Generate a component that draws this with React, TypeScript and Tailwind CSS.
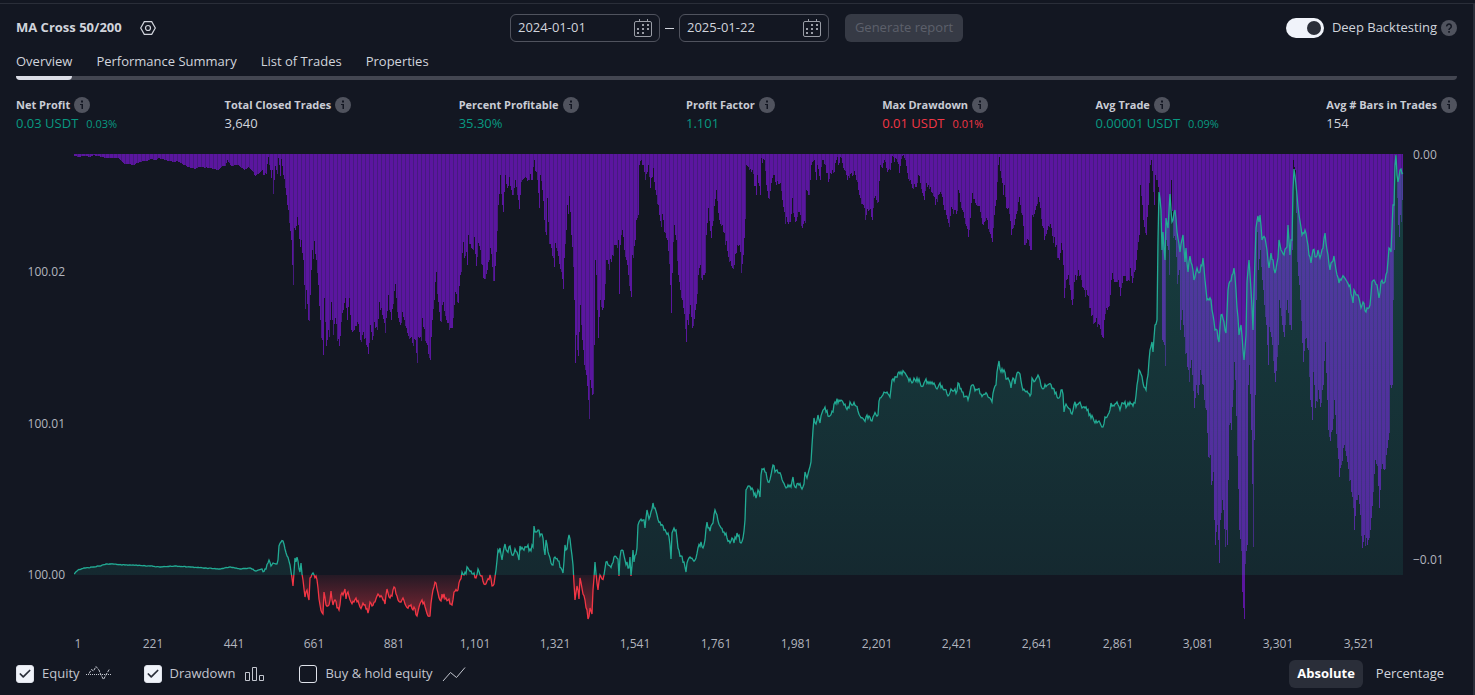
import { Check } from "lucide-react";
import type { ReactNode } from "react";

const STATS = [
  { label: "Net Profit", value: "0.03 USDT", percent: "0.03%", tone: "text-[#089981]" },
  { label: "Total Closed Trades", value: "3,640", tone: "text-[#d1d4dc]" },
  { label: "Percent Profitable", value: "35.30%", tone: "text-[#089981]" },
  { label: "Profit Factor", value: "1.101", tone: "text-[#089981]" },
  { label: "Max Drawdown", value: "0.01 USDT", percent: "0.01%", tone: "text-[#f23645]" },
  { label: "Avg Trade", value: "0.00001 USDT", percent: "0.09%", tone: "text-[#089981]" },
  { label: "Avg # Bars in Trades", value: "154", tone: "text-[#d1d4dc]" },
];

const TABS = ["Overview", "Performance Summary", "List of Trades", "Properties"];

// chart series as "x,y" pairs in chart units, y grows downwards
const EQUITY = `74,574 78,570 85,568 93,567 100,566 106,564 113,564 125,565 133,565 150,566 160,567 175,566 190,567 205,568
220,569 230,567 240,569 250,568 256,571 262,569 266,569 268,563 269,560 271,566 273,563 276,564 278,560 279,546 281,542 283,541
285,549 287,556 290,565 292,578 293,586 295,558 298,561 300,572 301,563 303,580 305,597 307,590 309,600 310,578 313,573 316,576
318,588 320,605 323,614 324,592 326,605 329,605 331,591 333,605 335,600 339,610 341,595 344,592 345,589 346,599 348,592 351,602
354,602 356,598 360,607 364,605 368,613 370,602 372,606 375,602 378,594 380,597 385,604 387,589 390,598 392,596 394,587 397,596
400,602 403,598 406,606 410,606 415,609 417,616 419,607 422,600 426,610 430,616 432,596 434,587 436,583 438,593 440,600 444,594
446,598 452,605 454,592 458,590 460,580 462,572 464,575 468,568 471,571 474,573 476,578 478,569 481,576 484,584 487,581 490,575
492,586 494,584 496,570 498,550 500,548 502,560 505,544 507,551 510,546 512,555 515,549 519,560 520,546 523,549 527,547 530,549
533,547 534,526 536,532 538,530 540,536 542,534 545,555 546,540 549,555 553,565 555,557 559,561 561,568 563,573 565,545 567,549
569,535 571,548 573,565 575,600 577,586 579,599 580,578 583,594 585,600 587,610 588,619 590,608 592,614 593,590 595,562 598,590
600,575 602,579 604,575 606,562 610,566 612,564 615,556 618,559 619,576 620,557 622,550 625,560 629,568 630,557 631,576 633,550
634,562 637,548 638,525 639,522 642,521 644,520 645,528 647,510 649,519 651,512 653,503 655,508 657,515 660,522 664,530 668,533
670,545 671,559 672,533 674,528 676,530 678,548 681,556 684,562 686,572 687,563 690,557 693,560 696,558 698,548 701,542 703,548
705,540 707,522 710,531 713,523 715,510 717,515 720,526 724,532 727,538 730,543 732,538 734,543 737,533 741,543 743,538 745,520
746,490 749,486 753,490 756,498 758,490 760,497 761,475 762,469 765,472 768,482 771,475 773,465 775,472 779,473 783,482 786,488
791,487 793,477 795,487 799,485 802,489 804,484 805,472 807,478 809,470 811,462 813,430 814,418 816,424 818,415 820,423 822,413
825,407 828,416 833,412 835,402 841,400 844,405 849,408 850,402 856,406 860,416 864,420 866,417 872,421 874,415 878,415 879,401
882,396 886,393 890,397 892,380 896,377 900,374 904,372 908,378 913,382 917,378 923,386 925,381 932,382 936,388 940,383 944,390
949,395 951,389 957,391 958,383 962,392 968,400 970,392 972,385 977,390 983,395 987,394 992,402 994,389 996,385 997,372 999,361
1001,372 1004,370 1006,379 1009,380 1011,388 1013,378 1015,384 1017,373 1020,374 1023,390 1026,392 1031,394 1032,378 1035,381
1038,375 1043,389 1049,384 1054,389 1059,398 1061,390 1063,394 1064,412 1066,404 1070,409 1072,414 1074,405 1079,403 1085,408
1090,414 1094,421 1099,421 1103,427 1105,417 1109,413 1111,403 1115,404 1117,402 1120,410 1123,403 1127,406 1130,402 1133,406
1135,403 1137,385 1139,370 1141,374 1143,383 1146,390 1148,375 1150,350 1152,342 1153,352 1155,325 1157,320 1158,240 1159,192
1161,210 1162,250 1163,232 1165,260 1166,218 1168,228 1170,194 1172,222 1175,210 1177,232 1180,252 1183,235 1185,262 1186,248
1188,272 1190,256 1192,265 1194,280 1197,268 1200,272 1203,258 1205,280 1207,300 1211,300 1213,315 1215,330 1217,330 1219,342
1221,315 1224,322 1226,333 1228,290 1232,275 1234,268 1236,290 1239,335 1241,325 1243,350 1244,360 1246,335 1247,282 1249,260
1251,290 1253,330 1254,290 1256,228 1258,216 1259,222 1260,215 1262,240 1265,238 1267,250 1269,268 1271,253 1273,260 1275,273
1278,258 1279,240 1281,250 1284,255 1287,247 1288,225 1290,255 1291,240 1292,240 1293,190 1294,169 1296,185 1297,195 1299,215
1302,235 1305,230 1307,240 1309,255 1311,263 1313,250 1316,257 1318,250 1320,258 1323,248 1325,233 1327,250 1330,270 1332,262
1334,256 1336,270 1339,283 1342,278 1346,280 1350,285 1353,303 1354,290 1358,295 1361,308 1363,302 1366,312 1370,305 1372,282
1374,280 1377,285 1379,298 1381,282 1384,283 1387,272 1389,248 1391,252 1393,205 1394,205 1395,165 1396,155 1397,175 1398,182
1400,170 1403,173`;

const DRAWDOWN = `74,156 78,157 84,156 90,157 93,155 97,156 106,158 118,158 121,161 124,164 129,164 133,165 137,163 142,161 147,161
150,159 155,160 158,158 165,160 170,161 175,162 177,161 182,164 188,167 194,169 200,167 210,168 218,170 222,166 225,166 227,160
231,166 238,165 244,170 248,167 252,171 255,176 259,173 262,170 266,174 268,157 271,178 272,170 273,194 275,166 277,174 278,158
280,176 281,159 283,175 285,185 287,205 289,220 291,240 293,284 294,228 295,230 297,215 298,225 300,247 301,240 303,260 305,308
306,290 308,320 309,320 311,270 312,250 313,258 314,241 316,260 318,285 320,320 322,340 323,355 324,298 326,346 328,330 329,332
331,302 333,333 335,318 339,346 341,320 343,310 345,296 347,320 349,298 351,330 354,330 357,320 360,340 363,332 366,345 368,354
370,325 372,340 374,322 377,330 379,302 382,315 385,332 388,295 391,320 395,284 397,310 400,325 402,312 406,328 410,338 413,342
415,340 417,360 418,337 421,338 422,318 425,340 427,345 430,360 432,320 434,300 436,272 437,290 440,321 443,302 445,315 449,326
452,328 455,292 458,303 460,275 463,242 464,258 466,252 467,265 468,235 470,244 473,248 474,237 476,266 478,243 480,250 483,278
487,270 490,248 491,254 493,280 494,281 496,252 498,205 500,175 502,205 503,212 505,175 507,188 509,177 512,195 515,180 519,209
521,182 524,178 528,180 530,174 532,180 534,160 537,180 539,208 540,175 542,190 544,220 546,235 547,198 549,240 551,248 553,258
554,267 555,243 558,256 561,270 563,289 564,258 566,230 567,205 568,214 569,195 571,235 573,262 574,300 575,363 576,335 578,356
580,305 582,340 584,365 586,375 588,400 589,418 590,380 592,395 593,390 594,345 595,260 596,275 598,338 600,300 602,310 604,300
606,260 609,265 612,255 614,245 616,245 618,240 619,294 620,245 622,230 624,250 626,260 628,275 631,297 632,255 635,240 636,220
638,215 639,165 641,160 643,165 645,180 648,165 650,188 653,168 655,190 658,205 661,225 662,214 664,232 667,240 669,260 671,313
673,240 674,225 676,240 678,275 680,290 683,308 685,325 686,342 687,320 688,325 690,305 692,328 695,310 697,290 698,275 700,265
702,280 705,270 706,235 708,208 711,238 713,218 716,190 717,200 719,220 722,225 725,240 729,260 732,268 734,265 737,242 740,252
741,270 743,255 745,215 746,165 749,170 752,170 756,195 757,175 760,195 761,158 764,160 766,185 768,198 771,183 773,175 776,185
780,183 782,200 785,220 788,224 790,222 792,198 795,222 799,212 801,225 805,222 806,190 808,195 810,180 811,165 814,160 816,180
817,165 820,180 822,160 825,165 828,182 830,173 834,172 836,160 839,163 840,157 843,168 846,175 849,178 851,173 855,175 858,190
861,203 864,208 866,215 869,208 872,220 874,198 878,202 880,165 882,168 884,160 887,172 890,170 892,156 897,162 899,173 902,156
905,160 907,173 910,180 913,188 916,187 918,175 921,185 924,200 926,183 930,187 933,195 935,205 938,195 941,190 943,205 946,215
949,223 951,207 955,210 957,210 958,190 961,205 964,218 968,237 970,218 972,193 975,203 980,212 983,225 986,218 989,232 992,242
994,215 996,200 998,165 999,157 1001,178 1003,195 1004,185 1006,208 1009,212 1011,235 1014,225 1017,210 1019,197 1022,215
1024,245 1028,240 1031,250 1032,215 1035,210 1038,197 1041,215 1044,240 1047,230 1049,222 1053,238 1056,245 1059,260 1061,240
1063,265 1064,298 1066,280 1068,275 1070,290 1072,305 1074,282 1078,270 1081,280 1084,290 1087,295 1090,308 1093,322 1096,318
1099,325 1103,338 1104,320 1106,308 1109,305 1111,280 1112,273 1115,282 1118,280 1120,296 1122,283 1124,276 1128,280 1130,268
1132,283 1135,270 1137,245 1139,235 1140,185 1141,195 1143,220 1146,235 1148,205 1150,165 1151,160 1154,205 1155,175 1157,180
1159,195 1161,220 1162,340 1164,345 1165,362 1166,240 1168,250 1169,272 1170,200 1171,180 1173,235 1175,240 1177,280 1179,270
1180,330 1182,310 1185,350 1188,370 1189,380 1191,360 1194,408 1196,385 1198,395 1200,370 1203,385 1204,400 1206,410 1208,457
1210,455 1211,485 1213,470 1214,520 1215,545 1217,520 1218,540 1219,563 1220,520 1222,500 1223,510 1225,546 1226,530 1227,545
1228,480 1229,420 1231,430 1233,385 1234,362 1235,380 1237,455 1239,530 1241,550 1242,592 1244,619 1245,560 1247,545 1248,385
1249,360 1251,430 1253,545 1254,440 1255,395 1256,300 1257,230 1258,270 1260,250 1262,280 1264,305 1266,325 1268,365 1269,325
1272,345 1275,382 1278,345 1279,300 1282,325 1284,337 1287,300 1289,320 1291,330 1292,250 1293,160 1295,170 1297,260 1300,300
1303,362 1305,335 1308,350 1310,400 1312,420 1313,370 1315,408 1318,390 1320,407 1323,385 1325,342 1327,400 1328,430 1330,441
1332,430 1334,400 1337,445 1339,477 1341,465 1344,445 1347,462 1350,480 1353,505 1354,530 1356,500 1358,495 1360,515 1362,548
1364,535 1367,545 1370,530 1373,490 1375,460 1377,465 1379,508 1381,465 1384,470 1386,455 1389,430 1390,385 1392,385 1393,300
1394,250 1395,165 1396,155 1398,225 1399,237 1400,215 1401,220 1402,200 1403,210`;

const TOP = 154;
const BASE = 575;
const LEFT = 74;
const RIGHT = 1403;

// cheap repeatable noise in -1..1
const noise = (n: number) => {
  const s = Math.sin(n * 12.9898) * 43758.5453;
  return (s - Math.floor(s)) * 2 - 1;
};

// one sample per column; samples between two known points get a little noise
function resample(series: string, amount: number) {
  const pts = series.trim().split(/\s+/).map((p) => p.split(",").map(Number));
  const out: number[] = [];
  for (let i = 0; i < pts.length - 1; i++) {
    const [x0, y0] = pts[i];
    const [x1, y1] = pts[i + 1];
    for (let x = x0; x < x1; x++) {
      const y = y0 + ((y1 - y0) * (x - x0)) / (x1 - x0);
      out.push(x === x0 ? y : y + noise(x) * (x < 262 ? 0.3 : amount));
    }
  }
  out.push(pts[pts.length - 1][1]);
  return out;
}

const equity = resample(EQUITY, 3);
const drawdown = resample(DRAWDOWN, 4);

const linePath = "M" + equity.map((y, i) => `${LEFT + i},${y.toFixed(1)}`).join("L");
const areaPath = `${linePath}L${RIGHT},${BASE}L${LEFT},${BASE}Z`;

const columns = (keep: (i: number) => boolean, extra: number) =>
  drawdown
    .map((y, i) => {
      if (!keep(i) || LEFT + i >= RIGHT) return "";
      const bottom = Math.max(TOP + 1, Math.round(y + extra * (y - TOP > 30 ? Math.abs(noise(i)) : 0)));
      return `M${LEFT + i},${TOP}h1V${bottom}h-1Z`;
    })
    .join("");

const isGap = (i: number) => i % 4 === 3;
const barsPath = columns((i) => !isGap(i), 0);
const gapsPath = columns(isGap, 5);

const X_LABELS = Array.from({ length: 17 }, (_, i) => ({
  text: (1 + i * 220).toLocaleString("en-US"),
  x: i === 0 ? 78 : 73 + i * 80.35,
}));

function Chart() {
  return (
    <svg viewBox="0 145 1473 510" className="block w-full h-auto" role="img" aria-label="Equity and drawdown">
      <defs>
        <clipPath id="above">
          <rect x={LEFT} y={TOP - 2} width={RIGHT - LEFT + 1} height={BASE - TOP + 2} />
        </clipPath>
        <clipPath id="below">
          <rect x={LEFT} y={BASE} width={RIGHT - LEFT + 1} height={60} />
        </clipPath>
        <linearGradient id="gain" gradientUnits="userSpaceOnUse" x1="0" x2="0" y1={TOP} y2={BASE}>
          <stop offset="0" stopColor="#22ab94" stopOpacity="0.28" />
          <stop offset="1" stopColor="#22ab94" stopOpacity="0.12" />
        </linearGradient>
        <linearGradient id="loss" gradientUnits="userSpaceOnUse" x1="0" x2="0" y1={BASE} y2={BASE + 44}>
          <stop offset="0" stopColor="#f23645" stopOpacity="0.08" />
          <stop offset="1" stopColor="#f23645" stopOpacity="0.5" />
        </linearGradient>
      </defs>

      <path d={barsPath} fill="#5b169f" shapeRendering="crispEdges" />
      <path d={gapsPath} fill="#461a7f" shapeRendering="crispEdges" />

      <g clipPath="url(#above)">
        <path d={areaPath} fill="url(#gain)" />
        <path d={linePath} fill="none" stroke="#22ab94" strokeWidth="1.3" />
      </g>
      <g clipPath="url(#below)">
        <path d={areaPath} fill="url(#loss)" />
        <path d={linePath} fill="none" stroke="#f23645" strokeWidth="1.3" />
      </g>

      <g fill="#b2b5be" fontSize="12" fontWeight="500">
        <text x="65" y="276" textAnchor="end">100.02</text>
        <text x="65" y="428" textAnchor="end">100.01</text>
        <text x="65" y="579" textAnchor="end">100.00</text>
        <text x="1413" y="159">0.00</text>
        <text x="1413" y="564">−0.01</text>
        {X_LABELS.map((l) => (
          <text key={l.text} x={Math.round(l.x)} y="648" textAnchor="middle">
            {l.text}
          </text>
        ))}
      </g>
    </svg>
  );
}

function InfoIcon() {
  return (
    <svg width="16" height="16" viewBox="0 0 16 16" className="shrink-0">
      <circle cx="8" cy="8" r="8" fill="#50535e" />
      <path d="M7 3.5h2v2H7zM6 7h3v5H7.5V8H6z" fill="#131722" />
    </svg>
  );
}

function HelpIcon() {
  return (
    <svg width="16" height="16" viewBox="0 0 16 16" className="shrink-0">
      <circle cx="8" cy="8" r="8" fill="#50535e" />
      <path d="M5.7 6.4a2.3 2.2 0 1 1 3.6 1.7C8.4 8.7 8 9 8 9.9" fill="none" stroke="#131722" strokeWidth="1.6" />
      <path d="M7.2 11h1.700v1.700H7.200z" fill="#131722" />
    </svg>
  );
}

function CalendarIcon() {
  return (
    <svg width="18" height="18" viewBox="0 0 18 18" fill="none" className="shrink-0" stroke="#9a9da6">
      <rect x="0.5" y="2.5" width="17" height="15" rx="1.5" />
      <path d="M5.5 0v2.5M13.5 0v2.5" />
      <path
        d="M8 5h2v2H8zM13 5h2v2h-2zM3 9h2v2H3zM8 9h2v2H8zM13 9h2v2h-2zM3 13h2v2H3zM8 13h2v2H8z"
        fill="#9a9da6"
        stroke="none"
      />
    </svg>
  );
}

function DateField({ label, value }: { label: string; value: string }) {
  return (
    <label className="flex h-7 w-[150px] items-center rounded-md border border-[#50535e] px-[7px]">
      <input aria-label={label} defaultValue={value} className="w-full min-w-0 bg-transparent text-[#d1d4dc] outline-none" />
      <CalendarIcon />
    </label>
  );
}

function Toggle({ label, checked, children }: { label: string; checked?: boolean; children: ReactNode }) {
  return (
    <label className="flex items-center gap-2">
      <span className="grid">
        <input
          type="checkbox"
          defaultChecked={checked}
          className="peer col-start-1 row-start-1 size-[18px] appearance-none rounded-[3px] border border-[#e0e3eb] checked:bg-[#f0f3fa]"
        />
        <Check
          size={14}
          strokeWidth={3}
          className="pointer-events-none col-start-1 row-start-1 hidden place-self-center text-[#2a2e39] peer-checked:block"
        />
      </span>
      <span className="flex items-center gap-1.5">
        {label}
        {children}
      </span>
    </label>
  );
}

export default function App() {
  return (
    <div className="min-h-screen bg-[#131722] pt-[3px] font-['Open_Sans',sans-serif] text-[13px] font-medium text-[#d1d4dc]">
      <div className="min-h-[692px] border-t border-r-2 border-[#2a2e39]">
        <header className="grid grid-cols-[1fr_auto_1fr] items-center px-4 pt-2.5">
          <div className="flex items-center gap-[18px]">
            <h1 className="font-bold">MA Cross 50/200</h1>
            <button aria-label="Settings">
              <svg width="16" height="14" viewBox="0 0 16 14" fill="none" stroke="#d1d4dc" strokeWidth="1.2">
                <path d="M4.3.6h7.4L15.3 7l-3.6 6.4H4.3L.7 7z" />
                <circle cx="8" cy="7" r="2.5" />
              </svg>
            </button>
          </div>
          <div className="flex items-center">
            <DateField label="From" value="2024-01-01" />
            <span className="mx-[5px] h-px w-[9px] bg-[#d1d4dc]" />
            <DateField label="To" value="2025-01-22" />
            <button disabled className="ml-4 h-7 w-[118px] rounded-md bg-[#363a45] text-[#5d606b]">
              Generate report
            </button>
          </div>
          <div className="flex items-center justify-end">
            <label className="flex items-center gap-2">
              <input
                type="checkbox"
                role="switch"
                defaultChecked
                className="flex h-5 w-[38px] appearance-none items-center justify-end rounded-full bg-[#f0f3fa] px-[3px] before:size-3.5 before:rounded-full before:bg-[#2a2e39]"
              />
              Deep Backtesting
            </label>
            <span className="ml-1">
              <HelpIcon />
            </span>
          </div>
        </header>

        <nav className="mx-4 mt-[9px] flex gap-6 rounded-b-sm bg-[linear-gradient(#434651,#434651)] bg-[length:100%_4px] bg-bottom bg-no-repeat">
          {TABS.map((tab, i) => (
            <button
              key={tab}
              className={
                i === 0
                  ? "rounded-b-sm border-b-4 border-[#dbdde6] pb-[5px] leading-5"
                  : "border-b-4 border-transparent pb-[5px] leading-5"
              }
            >
              {tab}
            </button>
          ))}
        </nav>

        <dl className="flex justify-between px-4 pt-4">
          {STATS.map((s) => (
            <div key={s.label}>
              <dt className="flex h-[18px] items-center gap-1 text-[11px] font-bold text-[#c9ccd5]">
                {s.label}
                <InfoIcon />
              </dt>
              <dd className={`flex h-5 items-center gap-2 ${s.tone}`}>
                {s.value}
                {s.percent && <span className="text-[11px]">{s.percent}</span>}
              </dd>
            </div>
          ))}
        </dl>

        <div className="mt-[11px]">
          <Chart />
        </div>

        <footer className="flex items-center justify-between pt-[5px] pr-[21px] pl-4">
          <div className="flex items-center gap-[30px] text-[#c3c6cf]">
            <Toggle label="Equity" checked>
              <svg width="28" height="18" viewBox="0 0 28 18" fill="none" stroke="#c3c6cf">
                <path d="M0 9.5h25" strokeDasharray="1 1" />
                <path d="M3 8.5l2.500-4 2 1.500L10 1.500l3 3.500 1.500 4 3 5.500 3-5.500 3-5" strokeDasharray="3 1" />
              </svg>
            </Toggle>
            <Toggle label="Drawdown" checked>
              <svg width="28" height="16" viewBox="0 0 28 16" fill="none" stroke="#c3c6cf">
                <path d="M4.5 6.5h4v8h-4zM11.5 1.5h4v13h-4zM18.5 9.5h4v5h-4z" />
              </svg>
            </Toggle>
            <Toggle label="Buy & hold equity">
              <svg width="28" height="16" viewBox="0 0 28 16" fill="none" stroke="#c3c6cf">
                <path d="M4 15l7.500-8.500 6 5L26 1.500" />
              </svg>
            </Toggle>
          </div>
          <div className="flex gap-[5px]">
            <button className="h-7 rounded-md bg-[#2a2e39] px-2 font-bold text-white">Absolute</button>
            <button className="h-7 px-2">Percentage</button>
          </div>
        </footer>
      </div>
    </div>
  );
}
